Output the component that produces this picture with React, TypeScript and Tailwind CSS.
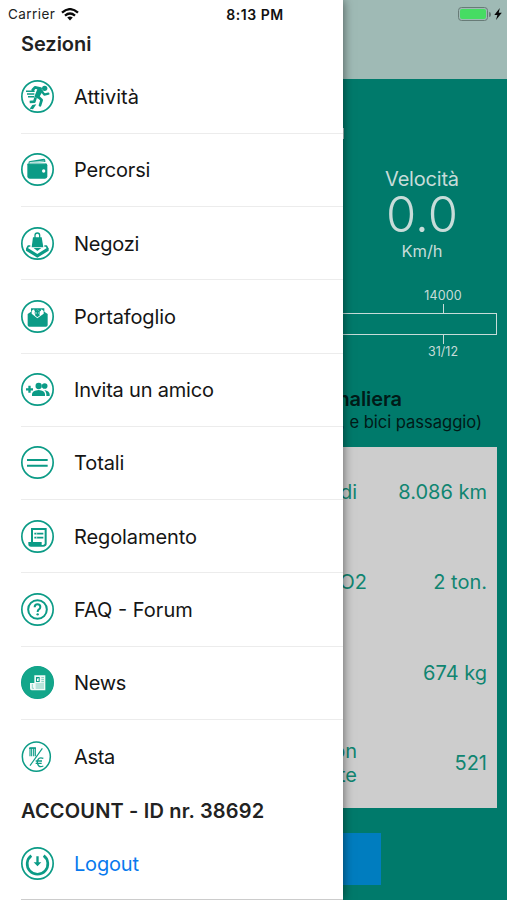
import type { ReactNode } from "react";

const teal = "#0b9b86";

function Ring({ children, small = false }: { children: ReactNode; small?: boolean }) {
  return (
    <svg viewBox="0 0 99 99" className="h-[33px] w-[33px] shrink-0" fill={teal} stroke="none">
      {small ? (
        <ellipse cx="46" cy="50" rx="42" ry="44" fill="none" stroke={teal} strokeWidth="4.5" />
      ) : (
        <circle cx="49.5" cy="49.5" r="47" fill="none" stroke={teal} strokeWidth="5" />
      )}
      {children}
    </svg>
  );
}

const runner = (
  <Ring>
    <circle cx="71" cy="25" r="8" />
    <path d="M35 30 L42 22 L59 26 L50 49 L62 60 L57 76" fill="none" stroke={teal} strokeWidth="8" strokeLinejoin="round" strokeLinecap="round" />
    <path d="M50 25 L66 32 L52 56 L40 50Z" />
    <path d="M61 32 L70 44 L82 41" fill="none" stroke={teal} strokeWidth="7" strokeLinecap="round" strokeLinejoin="round" />
    <path d="M44 52 L40 65 L26 66" fill="none" stroke={teal} strokeWidth="8" strokeLinejoin="round" />
    <path d="M46 73 L36 88 L26 86 L34 75Z" />
    <path d="M15 34h26M18 42h22M21 50h18" stroke={teal} strokeWidth="4.5" />
  </Ring>
);
const wallet = (
  <Ring>
    <path d="M19 34 Q19 31 24 31 H73 Q79 31 79 37 V70 Q79 77 72 77 H26 Q19 77 19 70Z" />
    <path d="M22 29 Q22 25 28 24 L69 17 Q73 17 73 23 V27Z" />
    <path d="M27 28.5 L70 24" stroke="#fff" strokeWidth="2" />
    <path d="M26 32 H73" stroke="#fff" strokeWidth="1" />
    <circle cx="68" cy="54" r="5" fill="#fff" />
  </Ring>
);
const shop = (
  <Ring>
    <path d="M36 31 H62 L67 61 H32Z" />
    <path d="M42 34 V25 Q42 18 49 18 Q56 18 56 25 V34" fill="none" stroke={teal} strokeWidth="4" />
    <path d="M28 57 H22 L18 64 L49 84 L80 64 L76 57 H70" fill="none" stroke={teal} strokeWidth="5" strokeLinejoin="round" />
    <path d="M15 63 V71 L49 92 L83 71 V63 L49 84Z" />
    <path d="M38 63 L49 72 L61 63Z" />
  </Ring>
);
const portfolio = (
  <Ring>
    <path d="M20 42 L30 35 V25 H70 V35 L80 42 V75 Q80 80 75 80 H25 Q20 80 20 75Z" />
    <path d="M32 41 L49 55 L68 41 V33 Q62 25 57 31 Q50 27 43 31 Q37 25 32 33Z" fill="#fff" />
    <circle cx="49" cy="38" r="8" />
    <path d="M42 46 Q49 39 57 46 L49 52Z" />
    <circle cx="43" cy="31" r="3" />
    <circle cx="57" cy="31" r="3" />
    <path d="M43 39h4M52 39h4" stroke="#fff" strokeWidth="3" />
  </Ring>
);
const invite = (
  <Ring>
    <path d="M15 49 H36 M25.5 38.5 V59.5" stroke={teal} strokeWidth="7" />
    <circle cx="53" cy="39" r="9.5" />
    <circle cx="71" cy="39" r="8.5" />
    <path d="M33 69 V63 Q34 53 53 51 Q71 53 72 63 V69Z" />
    <path d="M70 51 Q85 54 86 63 V69 H76 V63 Q75 56 70 51Z" />
  </Ring>
);
const totals = (
  <Ring>
    <path d="M18 42h62M18 59h62" stroke={teal} strokeWidth="6" />
  </Ring>
);
const rules = (
  <Ring>
    <path d="M33 67 V27 H74 V71 Q74 76 68 76" fill="none" stroke={teal} strokeWidth="6" />
    <path d="M22 66 H62 V75 H74 Q73 80 67 80 H30 Q22 80 22 72Z" />
    <path d="M40 41h27M40 53h27" stroke={teal} strokeWidth="5" />
    <path d="M47 38v6M47 50v6" stroke="#fff" strokeWidth="2" />
  </Ring>
);
const faq = (
  <Ring>
    <circle cx="49.5" cy="49.5" r="28" fill="none" stroke={teal} strokeWidth="6" />
    <path d="M41 43 Q41 34 49.5 34 Q58 34 58 42 Q58 47 53 50 Q50 52 50 57" fill="none" stroke={teal} strokeWidth="6" />
    <circle cx="50" cy="64" r="3.6" />
  </Ring>
);
const news = (
  <Ring>
    <circle cx="49.5" cy="49.5" r="48" fill="#13a68a" />
    <path d="M40 28 H73 V73 H32 Q27 73 27 67 V51 H40Z" fill="#f0faf7" />
    <path d="M45 33h11v15h-11z" fill={teal} />
    <path d="M48 45V38l5-2v9z" fill="#fff" />
    <path d="M61 35h8M61 41h8M61 47h8M44 54h25M44 60h25M44 66h25" stroke="#68c4b2" strokeWidth="2.5" />
    <path d="M34 54v13h5" fill="none" stroke="#68c4b2" strokeWidth="2" />
  </Ring>
);
const auction = (
  <Ring small>
    <path d="M27 49 V23 H43 V49 M32 24v25M38 24v25" fill="none" stroke={teal} strokeWidth="3.2" />
    <path d="M24 25h21" stroke={teal} strokeWidth="3" />
    <path d="M64 25 L27 77" stroke={teal} strokeWidth="3.4" />
    <path d="M67 55 Q51 49 49 66 Q50 85 67 78 M44 63h19M44 70h18" fill="none" stroke={teal} strokeWidth="4" />
  </Ring>
);
const logout = (
  <Ring>
    <path d="M31 26 A31 31 0 1 0 68 26" fill="none" stroke={teal} strokeWidth="8" />
    <path d="M46 28 H53 V46 H61 L49.5 58 L38 46 H46Z" />
  </Ring>
);

const sections = [
  { label: "Attività", icon: runner, type: "tracking-[0.02px]" },
  { label: "Percorsi", icon: wallet, type: "tracking-[-0.22px]" },
  { label: "Negozi", icon: shop, type: "tracking-[-0.25px]" },
  { label: "Portafoglio", icon: portfolio, type: "tracking-[-0.12px]" },
  { label: "Invita un amico", icon: invite, type: "tracking-[-0.2px]" },
  { label: "Totali", icon: totals, type: "tracking-[-0.1px]" },
  { label: "Regolamento", icon: rules, type: "tracking-[-0.1px]" },
  { label: "FAQ - Forum", icon: faq, type: "tracking-[0px]" },
  { label: "News", icon: news, type: "tracking-[-0.35px]" },
  { label: "Asta", icon: auction, type: "tracking-[-0.3px]" },
];

function StatusBar() {
  return (
    <header className="absolute inset-x-0 top-0 z-20 flex h-7 items-center text-[13.5px] text-[#222]">
      <div className="flex flex-1 items-center gap-[6px] pl-2">
        <span className="tracking-[0.45px]">Carrier</span>
        <svg viewBox="0 0 18 13" className="h-[13px] w-[18px]" fill="none" stroke="#080808" strokeWidth="2.3">
          <path d="M1 4.7 Q9 -2.4 17 4.7" />
          <path d="M4 7.7 Q9 3.4 14 7.7" />
          <path d="M6.2 9.5 Q9 7.4 11.8 9.5 L9 12.5Z" fill="#080808" stroke="none" />
        </svg>
      </div>
      <span className="flex w-[60px] justify-center text-[14px] font-semibold tracking-[0.55px] whitespace-nowrap text-[#111]">8:13 PM</span>
      <div className="flex flex-1 items-center justify-end gap-[3px] pr-[5px]">
        <div className="flex items-center gap-px">
          <div className="h-[14px] w-[30px] rounded-[3.5px] border border-[#687b77] p-px">
            <div className="h-full rounded-[2px] bg-[#46dc63]" />
          </div>
          <div className="h-[5px] w-[2px] rounded-r bg-[#687b77]" />
        </div>
        <svg viewBox="0 0 8 12" className="h-3 w-2" fill="#080808">
          <path d="M5.8 0 L0.3 7 H3.4 L2 12 L7.8 4.8 H4.7Z" />
        </svg>
      </div>
    </header>
  );
}

function Drawer() {
  return (
    <nav className="relative z-10 h-full w-[343px] shrink-0 bg-white pl-[21px] text-[20px] text-[#151515] shadow-[0_0_10px_rgba(0,0,0,0.55)]">
      <h2 className="flex h-[60.5px] items-end pb-[5px] text-[20px] leading-6 font-semibold tracking-[-0.05px] text-[#222]">Sezioni</h2>
      <ul>
        {sections.map((s, i) => (
          <li
            key={s.label}
            className={`flex h-[73.25px] items-center gap-5 ${i < sections.length - 1 ? "border-b border-[#ececec]" : ""}`}
          >
            {s.icon}
            <span className={`pt-px ${s.type}`}>{s.label}</span>
          </li>
        ))}
      </ul>
      <h2 className="flex h-[34.5px] items-center pt-px text-[20px] font-semibold tracking-[0.17px] text-[#222]">ACCOUNT - ID nr. 38692</h2>
      <a className="flex h-[72px] items-center gap-5 border-b border-[#ccc] text-[#0879ee]">
        {logout}
        <span className="pt-[2px] tracking-[-0.2px]">Logout</span>
      </a>
    </nav>
  );
}

const stats = [
  { left: "di", value: "8.086 km", width: "w-[14px]" },
  { left: "O2", value: "2 ton.", width: "w-[24px]" },
  { left: "", value: "674 kg", width: "w-[14px]" },
  { left: "on\nte", value: "521", width: "w-[14px]" },
];

function Dashboard() {
  return (
    <main className="flex h-full w-[164px] shrink-0 flex-col bg-[#007a6b] text-[#c7dcd9]">
      <div className="h-[79px] shrink-0 bg-[#9fbab5]" />
      <div className="mt-[49px] h-[11px] w-px shrink-0 bg-[#a9c9c5]" />
      <section className="mt-[27px] flex h-[96px] w-[158px] shrink-0 flex-col items-center">
        <span className="pt-px text-[20px] leading-6 tracking-[-0.2px]">Velocità</span>
        <span className="text-[49px] leading-[47px] font-[350]">0.0</span>
        <span className="pt-px text-[16.5px] leading-6">Km/h</span>
      </section>
      <section className="mt-[26px] flex h-[71px] w-[154px] shrink-0 flex-col text-[12.5px] leading-4">
        <div className="flex w-[100px] translate-x-[50px] flex-col items-center">
          <span className="tracking-[0.1px]">14000</span>
          <span className="h-[9px] w-px bg-[#c7dcd9]" />
        </div>
        <div className="h-[22px] w-full shrink-0 border border-l-0 border-[#c7dcd9]" />
        <div className="flex w-[100px] translate-x-[50px] flex-col items-center">
          <span className="h-[9px] w-px bg-[#c7dcd9]" />
          <span>31/12</span>
        </div>
      </section>
      <section className="mt-[28px] flex h-[60px] shrink-0 flex-col text-[#001b18]">
        <div className="flex w-[59px] justify-end text-[20px] leading-6 font-semibold tracking-[-0.1px] whitespace-nowrap">giornaliera</div>
        <div className="flex w-[139px] justify-end text-[16.6px] leading-[22px] tracking-[-0.05px] whitespace-nowrap">(piedi, e bici passaggio)</div>
      </section>
      <section className="h-[361px] w-[154px] shrink-0 bg-[#cdcdcd] pr-[10px] text-[20px] text-[#108571]">
        {stats.map((s) => (
          <div key={s.value} className="flex h-[90.25px] items-center justify-between">
            <span className={`flex justify-end text-right leading-6 whitespace-pre ${s.width}`}>{s.left}</span>
            <span>{s.value}</span>
          </div>
        ))}
      </section>
      <div className="mt-[25px] h-[52px] w-[38px] shrink-0 bg-[#007dbf]" />
    </main>
  );
}

export default function App() {
  return (
    <div className="relative flex h-[900px] w-[507px] overflow-hidden font-[Inter,'Liberation_Sans',sans-serif]">
      <StatusBar />
      <Drawer />
      <Dashboard />
    </div>
  );
}
